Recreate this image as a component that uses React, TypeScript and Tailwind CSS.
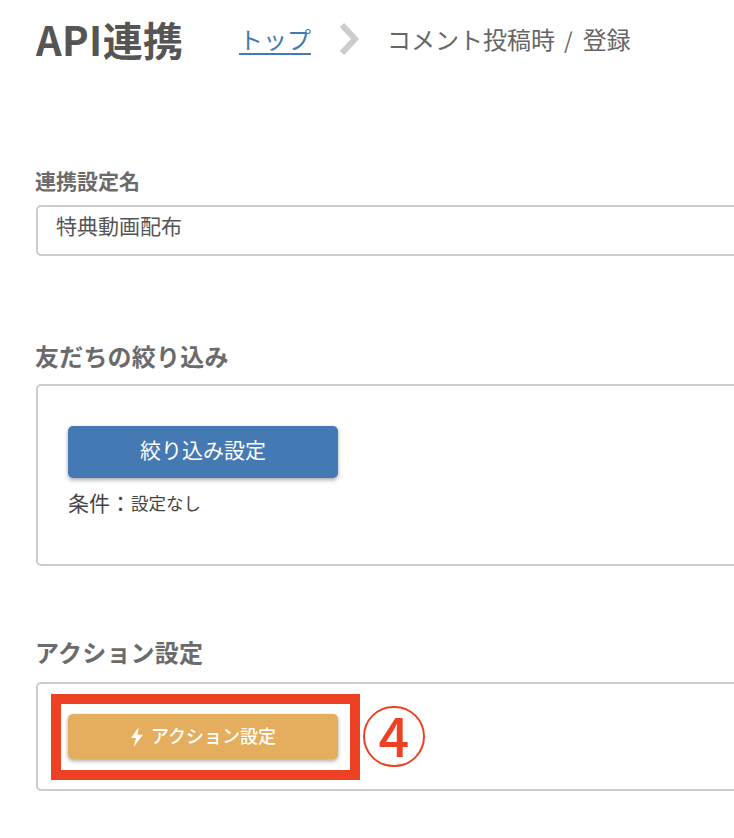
import React from "react";

const font = { fontFamily: '"Noto Sans CJK JP", "Noto Sans", sans-serif' };

export default function App() {
  return (
    <div style={font} className="w-[734px] h-[838px] overflow-hidden bg-white text-[#555] pl-[36px] flex flex-col">
      <div className="flex items-center h-[42px] mt-[18px]">
        <h1 className="text-[40px] leading-[42px] font-bold text-[#555] w-[203px] tracking-[0.4px] whitespace-nowrap">API連携</h1>
        <a className="text-[24px] leading-[30px] text-[#4479b3] underline underline-offset-4 w-[72px] whitespace-nowrap">トップ</a>
        <svg className="ml-[28px] w-[21px] h-[32px]" viewBox="0 0 21 32">
          <path d="M3 2 L16 16 L3 30" fill="none" stroke="#cccccc" strokeWidth="6" />
        </svg>
        <span className="ml-[27px] text-[24px] leading-[30px] text-[#666] whitespace-nowrap">コメント投稿時</span>
        <span className="ml-[9px] text-[22px] leading-[30px] text-[#666]">/</span>
        <span className="ml-[10px] text-[24px] leading-[30px] text-[#666] whitespace-nowrap">登録</span>
      </div>

      <div className="mt-[107px] -ml-px text-[21px] leading-[26px] font-bold text-[#6b6b6b]">連携設定名</div>
      <div className="mt-[12px] h-[51px] w-[720px] border-2 border-[#ccc] rounded-[5px] pl-[18px] pt-[3px] text-[21px] leading-[30px] text-[#555]">
        特典動画配布
      </div>

      <div className="mt-[85px] -ml-px text-[24px] leading-[30px] font-bold tracking-[0.2px] text-[#6b6b6b]">友だちの絞り込み</div>
      <div className="mt-[13px] h-[182px] w-[720px] border-2 border-[#ccc] rounded-[5px] pl-[30px] pt-[40px]">
        <button className="block w-[270px] h-[52px] rounded-[5px] bg-[#4479b3] text-white text-[21px] leading-[46px] pb-[6px] text-center shadow-[0_2px_4px_rgba(0,0,0,0.35)]">
          絞り込み設定
        </button>
        <div className="mt-[9px] flex items-center h-[32px] text-[#444]">
          <span className="text-[21px] w-[63px] whitespace-nowrap">条件：</span>
          <span className="text-[17.5px] whitespace-nowrap">設定なし</span>
        </div>
      </div>

      <div className="mt-[71px] -ml-px text-[24px] leading-[30px] font-bold tracking-[0.2px] text-[#6b6b6b]">アクション設定</div>
      <div className="mt-[15px] h-[109px] w-[720px] border-2 border-[#ccc] rounded-[5px] pl-[13px] pt-[10px] flex items-start">
        <div className="w-[309px] h-[86px] border-[10px] border-[#ee4023] pl-[7px] pt-[10px]">
          <button className="flex items-center justify-center w-[270px] h-[45px] pb-[2px] rounded-[5px] bg-[#e5ad5e] text-white text-[18px] font-medium shadow-[0_2px_4px_rgba(0,0,0,0.35)]">
            <svg className="w-[14px] h-[20px] mr-[7px] mt-[2px]" viewBox="0 0 13 18">
              <path d="M8 0 L1 10 L5.5 10 L3.5 18 L12 7 L7 7 Z" fill="#fff" />
            </svg>
            アクション設定
          </button>
        </div>
        <div className="ml-[3px] mt-[12px] w-[62px] h-[61px] pb-[6px] rounded-full border-2 border-[#ee4023] flex items-center justify-center text-[#ee4023] text-[54px] leading-none font-medium">
          4
        </div>
      </div>
    </div>
  );
}
